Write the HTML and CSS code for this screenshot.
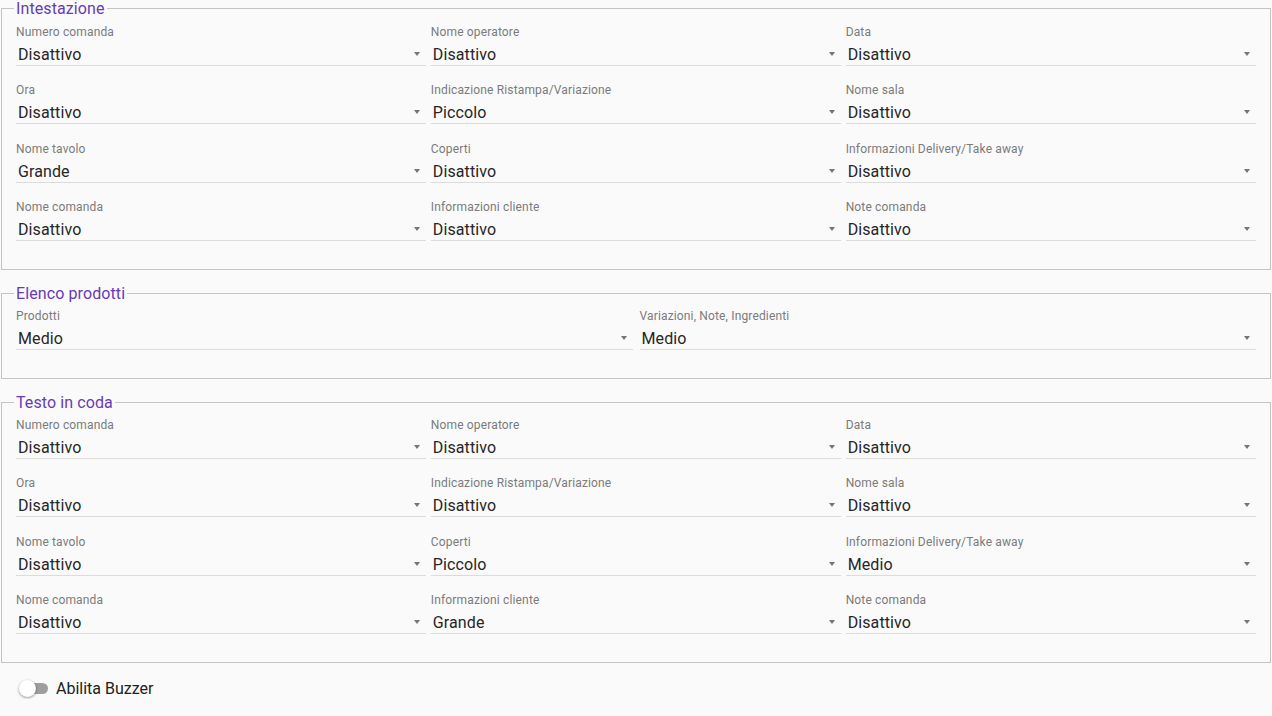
FILE: index.html
```html
<!DOCTYPE html>
<html lang="it">
<head>
    <meta charset="UTF-8">
    <meta name="viewport" content="width=device-width, initial-scale=1.0">
    <title>Impostazioni comanda</title>
    <link rel="stylesheet" href="styles.css">
</head>
<body>
    <fieldset class="section">
        <legend>Intestazione</legend>
        <div class="grid three">
            <div class="field"><label>Numero comanda</label><div class="select">Disattivo</div></div>
            <div class="field"><label>Nome operatore</label><div class="select">Disattivo</div></div>
            <div class="field"><label>Data</label><div class="select">Disattivo</div></div>
            <div class="field"><label>Ora</label><div class="select">Disattivo</div></div>
            <div class="field"><label>Indicazione Ristampa/Variazione</label><div class="select">Piccolo</div></div>
            <div class="field"><label>Nome sala</label><div class="select">Disattivo</div></div>
            <div class="field"><label>Nome tavolo</label><div class="select">Grande</div></div>
            <div class="field"><label>Coperti</label><div class="select">Disattivo</div></div>
            <div class="field"><label>Informazioni Delivery/Take away</label><div class="select">Disattivo</div></div>
            <div class="field"><label>Nome comanda</label><div class="select">Disattivo</div></div>
            <div class="field"><label>Informazioni cliente</label><div class="select">Disattivo</div></div>
            <div class="field"><label>Note comanda</label><div class="select">Disattivo</div></div>
        </div>
    </fieldset>

    <fieldset class="section">
        <legend>Elenco prodotti</legend>
        <div class="grid two">
            <div class="field"><label>Prodotti</label><div class="select">Medio</div></div>
            <div class="field"><label>Variazioni, Note, Ingredienti</label><div class="select">Medio</div></div>
        </div>
    </fieldset>

    <fieldset class="section">
        <legend>Testo in coda</legend>
        <div class="grid three">
            <div class="field"><label>Numero comanda</label><div class="select">Disattivo</div></div>
            <div class="field"><label>Nome operatore</label><div class="select">Disattivo</div></div>
            <div class="field"><label>Data</label><div class="select">Disattivo</div></div>
            <div class="field"><label>Ora</label><div class="select">Disattivo</div></div>
            <div class="field"><label>Indicazione Ristampa/Variazione</label><div class="select">Disattivo</div></div>
            <div class="field"><label>Nome sala</label><div class="select">Disattivo</div></div>
            <div class="field"><label>Nome tavolo</label><div class="select">Disattivo</div></div>
            <div class="field"><label>Coperti</label><div class="select">Piccolo</div></div>
            <div class="field"><label>Informazioni Delivery/Take away</label><div class="select">Medio</div></div>
            <div class="field"><label>Nome comanda</label><div class="select">Disattivo</div></div>
            <div class="field"><label>Informazioni cliente</label><div class="select">Grande</div></div>
            <div class="field"><label>Note comanda</label><div class="select">Disattivo</div></div>
        </div>
    </fieldset>

    <div class="buzzer">
        <span class="toggle"><span class="thumb"></span></span>
        <span>Abilita Buzzer</span>
    </div>
</body>
</html>
```

FILE: styles.css
```css
body {
    margin: 0;
    padding: 0 1px;
    font-family: Roboto, "Liberation Sans", Arial, sans-serif;
    background: #fafafa;
    color: #212121;
}

.section {
    margin: 0 0 15px 0;
    padding: 8px 14px 28px 14px;
    border: 1px solid #c4c4c4;
    min-width: 0;
}

.section + .section {
    padding-top: 7px;
}

.section legend {
    margin-left: -2px;
    padding: 0 2px;
    font-size: 16px;
    line-height: 17px;
    color: #673ab7;
    letter-spacing: 0.1px;
}

.grid {
    display: grid;
    column-gap: 4.5px;
    row-gap: 17.33px;
}

.grid.three {
    grid-template-columns: repeat(3, 1fr);
}

.grid.two {
    grid-template-columns: repeat(2, 1fr);
    column-gap: 7px;
}

.field label {
    display: block;
    font-size: 12px;
    line-height: 14px;
    color: #7b7b7b;
    letter-spacing: 0.15px;
}

.select {
    position: relative;
    height: 26px;
    padding-left: 2px;
    font-size: 16px;
    line-height: 31px;
    color: #262626;
    letter-spacing: 0.1px;
    border-bottom: 1px solid #dcdcdc;
}

.select::after {
    content: "";
    position: absolute;
    right: 6px;
    top: 13px;
    border-left: 3.5px solid transparent;
    border-right: 3.5px solid transparent;
    border-top: 4px solid #757575;
}

.buzzer {
    display: flex;
    align-items: center;
    gap: 8px;
    padding: 1px 0 0 19px;
    font-size: 16px;
    line-height: 20px;
    color: #212121;
}

.toggle {
    position: relative;
    display: inline-block;
    width: 28px;
    height: 11px;
    border-radius: 6px;
    background: #9e9e9e;
}

.thumb {
    position: absolute;
    left: -1px;
    top: -3px;
    width: 17px;
    height: 17px;
    border-radius: 50%;
    background: #fff;
    box-shadow: 0 1px 3px rgba(0, 0, 0, 0.4);
}
```
